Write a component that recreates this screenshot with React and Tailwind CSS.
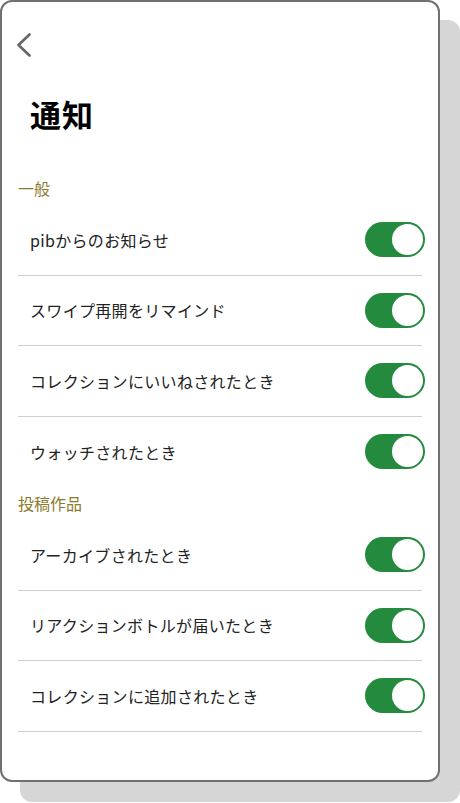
import React from "react";

function Toggle() {
  return (
    <div className="relative w-[60px] h-[35px] rounded-full bg-[#248a3d] -mr-[3px] shrink-0">
      <div className="absolute right-[2px] top-[2px] w-[31px] h-[31px] rounded-full bg-white" />
    </div>
  );
}

function Row({ label, border = true }) {
  return (
    <div
      className={
        "mx-[16px] h-[70.5px] flex items-center justify-between pl-[12px] " +
        (border ? "border-b border-[#cfcfcf]" : "")
      }
    >
      <span className="text-[16px] leading-[24px] text-[#222222] tracking-[0.02em]">{label}</span>
      <Toggle />
    </div>
  );
}

function Section({ title }) {
  return (
    <div className="pl-[16px] text-[16px] leading-[24px] text-[#8b7b2e]">{title}</div>
  );
}

export default function App() {
  return (
    <div
      className="w-[460px] h-[803px] bg-white"
      style={{ fontFamily: '"Noto Sans CJK JP", "Noto Sans", sans-serif' }}
    >
      <div className="w-[440px] h-[782px] border-2 border-[#707070] rounded-[12px] bg-white shadow-[20px_20px_0_0_#d6d6d6] flex flex-col">
        <div className="mt-[31px] ml-[14px]">
          <svg width="16" height="24" viewBox="0 0 16 24" fill="none">
            <polyline
              points="13.5,1.5 2.5,12 13.5,22.5"
              stroke="#666666"
              strokeWidth="2.6"
              strokeLinecap="round"
              strokeLinejoin="round"
            />
          </svg>
        </div>
        <h1 className="mt-[37px] pl-[28px] text-[31px] leading-[40px] font-bold text-black tracking-[0.03em]">
          通知
        </h1>
        <div className="mt-[42px]">
          <Section title="一般" />
        </div>
        <div className="mt-[5px]">
          <Row label="pibからのお知らせ" />
          <Row label="スワイプ再開をリマインド" />
          <Row label="コレクションにいいねされたとき" />
          <Row label="ウォッチされたとき" border={false} />
        </div>
        <div className="mt-[4px]">
          <Section title="投稿作品" />
        </div>
        <div className="mt-[5px]">
          <Row label="アーカイブされたとき" />
          <Row label="リアクションボトルが届いたとき" />
          <Row label="コレクションに追加されたとき" />
        </div>
      </div>
    </div>
  );
}
